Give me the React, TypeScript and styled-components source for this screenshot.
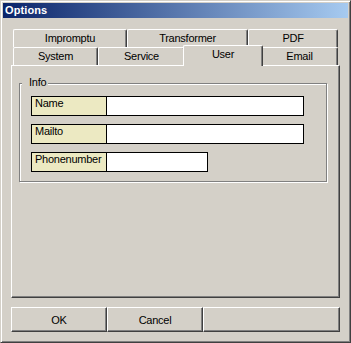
import React from "react";
import styled, { createGlobalStyle } from "styled-components";

const Global = createGlobalStyle`
  html, body { margin: 0; padding: 0; background: #D4D0C8; }
  body { font-family: "Liberation Sans", Arial, sans-serif; font-size: 11px; color: #000; letter-spacing: -0.25px; }
`;

const Window = styled.div`
  box-sizing: border-box;
  width: 351px;
  height: 343px;
  background: #d4d0c8;
  border-top: 1px solid #d4d0c8;
  border-left: 1px solid #d4d0c8;
  border-right: 1px solid #404040;
  border-bottom: 1px solid #404040;
  box-shadow: inset 1px 1px 0 #ffffff, inset -1px -1px 0 #808080;
  padding: 2px;
  display: flex;
  flex-direction: column;
`;

const TitleBar = styled.div`
  height: 15px;
  display: flex;
  align-items: center;
  padding-left: 2px;
  background: linear-gradient(to right, #0a246a, #a6caf0);
  color: #ffffff;
  font-weight: bold;
  font-size: 11px;
  line-height: 13px;
  letter-spacing: 0.1px;
`;

const Body = styled.div`
  flex: 1;
  display: flex;
  flex-direction: column;
  padding: 11px 8px 8px 8px;
`;

const TabRow = styled.div`
  display: flex;
  align-items: flex-start;
  height: 18px;
  margin-left: 2px;
`;

const Tab = styled.div<{ $w: number; $selected?: boolean }>`
  box-sizing: border-box;
  flex: none;
  width: ${(p) => p.$w}px;
  height: ${(p) => (p.$selected ? 21 : 18)}px;
  margin: ${(p) => (p.$selected ? "-2px -2px 0 -2px" : "0")};
  position: ${(p) => (p.$selected ? "relative" : "static")};
  z-index: ${(p) => (p.$selected ? 1 : "auto")};
  background: #d4d0c8;
  border-top: 1px solid #ffffff;
  border-left: 1px solid #ffffff;
  border-right: 1px solid #404040;
  border-radius: 2px 2px 0 0;
  box-shadow: inset -1px 0 0 #808080;
  padding-top: 1px;
  line-height: 14px;
  text-align: center;
  white-space: nowrap;
`;

const Panel = styled.div`
  flex: 1;
  box-sizing: border-box;
  border-top: 1px solid #ffffff;
  border-left: 1px solid #ffffff;
  border-right: 1px solid #404040;
  border-bottom: 1px solid #404040;
  box-shadow: inset -1px -1px 0 #808080;
  padding: 17px 12px 0 7px;
  display: flex;
  flex-direction: column;
  align-items: stretch;
`;

const Group = styled.div`
  box-sizing: border-box;
  border: 1px solid #808080;
  box-shadow: inset 1px 1px 0 #ffffff, 1px 1px 0 #ffffff;
  padding: 0 10px 9px 11px;
  display: flex;
  flex-direction: column;
  align-items: flex-start;
`;

const Caption = styled.span`
  margin-top: -8px;
  margin-left: -9px;
  padding: 0 2px 0 7px;
  background: #d4d0c8;
  line-height: 13px;
`;

const Fields = styled.div`
  margin-top: 7px;
  display: flex;
  flex-direction: column;
  gap: 8px;
`;

const FieldRow = styled.div`
  display: flex;
`;

const FieldLabel = styled.div`
  box-sizing: border-box;
  width: 76px;
  height: 20px;
  border: 1px solid #000000;
  background: #ece9c2;
  padding: 0 0 0 3px;
  line-height: 13px;
  white-space: nowrap;
  overflow: hidden;
`;

const FieldInput = styled.input<{ $w: number }>`
  box-sizing: border-box;
  width: ${(p) => p.$w}px;
  height: 20px;
  margin: 0 0 0 -1px;
  border: 1px solid #000000;
  background: #ffffff;
  padding: 0 2px;
  outline: none;
  font: inherit;
`;

const ButtonBar = styled.div`
  margin-top: 9px;
  height: 25px;
  display: flex;
`;

const Button = styled.button<{ $w?: number }>`
  box-sizing: border-box;
  ${(p) => (p.$w ? `width: ${p.$w}px; flex: none;` : "flex: 1;")}
  height: 25px;
  background: #d4d0c8;
  border-top: 1px solid #ffffff;
  border-left: 1px solid #ffffff;
  border-right: 1px solid #404040;
  border-bottom: 1px solid #404040;
  border-radius: 0;
  box-shadow: inset -1px -1px 0 #808080;
  padding: 0;
  margin: 0;
  font-family: "Liberation Sans", Arial, sans-serif;
  font-size: 11px;
  letter-spacing: -0.25px;
  color: #000;
`;

const fields = [
  { label: "Name", w: 198 },
  { label: "Mailto", w: 198 },
  { label: "Phonenumber", w: 102 },
];

export default function App() {
  return (
    <>
      <Global />
      <Window>
        <TitleBar>Options</TitleBar>
        <Body>
          <TabRow>
            <Tab $w={114}>Impromptu</Tab>
            <Tab $w={121}>Transformer</Tab>
            <Tab $w={90}>PDF</Tab>
          </TabRow>
          <TabRow>
            <Tab $w={85}>System</Tab>
            <Tab $w={87}>Service</Tab>
            <Tab $w={80} $selected>
              User
            </Tab>
            <Tab $w={77}>Email</Tab>
          </TabRow>
          <Panel>
            <Group>
              <Caption>Info</Caption>
              <Fields>
                {fields.map((f) => (
                  <FieldRow key={f.label}>
                    <FieldLabel>{f.label}</FieldLabel>
                    <FieldInput $w={f.w} defaultValue="" />
                  </FieldRow>
                ))}
              </Fields>
            </Group>
          </Panel>
          <ButtonBar>
            <Button $w={96}>OK</Button>
            <Button $w={96}>Cancel</Button>
            <Button></Button>
          </ButtonBar>
        </Body>
      </Window>
    </>
  );
}
